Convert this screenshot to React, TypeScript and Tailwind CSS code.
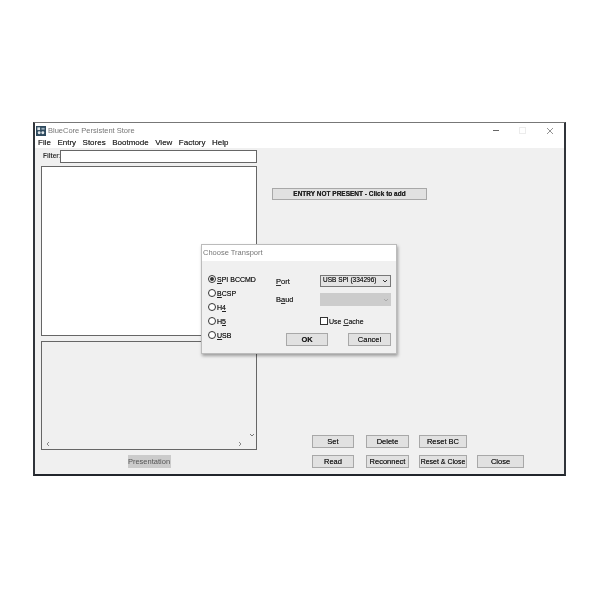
import React from "react";

const Btn = ({ label, w, cls = "" }: { label: string; w: string; cls?: string }) => (
  <div className={`${w} h-[13px] shrink-0 flex items-center justify-center whitespace-nowrap bg-[#e1e1e1] border border-[#a8a8a8] text-[7.5px] leading-none text-[#222] [text-shadow:0_0_0.5px_#444] ${cls}`}>
    {label}
  </div>
);

const Radio = ({ label, on }: { label: React.ReactNode; on?: boolean }) => (
  <div className="flex items-center gap-[1px] h-[14px] text-[7px] leading-none text-[#222] whitespace-nowrap [text-shadow:0_0_0.5px_#444]">
    <span className="w-[8px] h-[8px] rounded-full border border-[#333] bg-white flex items-center justify-center">
      {on && <span className="w-[4px] h-[4px] rounded-full bg-[#333]" />}
    </span>
    <span>{label}</span>
  </div>
);

export default function App() {
  const menu = ["File", "Entry", "Stores", "Bootmode", "View", "Factory", "Help"];
  return (
    <div className="w-[600px] h-[600px] bg-white pl-[33px] pt-[122px] font-['Liberation_Sans',sans-serif] overflow-hidden">
      <div className="relative w-[533px] h-[354px] flex flex-col border-l-2 border-r-2 border-b-2 border-t border-l-[#30343a] border-r-[#30343a] border-b-[#22262c] border-t-[#777] bg-white blur-[0.3px]">
        {/* title bar */}
        <div className="h-[13px] mt-[1px] flex items-center pl-[1px] shrink-0">
          <svg width="10" height="10" viewBox="0 0 11 11" className="shrink-0">
            <rect width="11" height="11" fill="#2f4a5e" />
            <rect x="1.5" y="1.5" width="3" height="3" fill="#dfe6ea" />
            <rect x="6" y="2" width="3.5" height="2" fill="#9fb2be" />
            <circle cx="3.5" cy="7.5" r="1.6" fill="#dfe6ea" />
            <circle cx="7.5" cy="7.5" r="1.6" fill="#dfe6ea" />
          </svg>
          <span className="ml-[2px] text-[7.5px] leading-none text-[#777]">BlueCore Persistent Store</span>
          <div className="ml-auto flex items-center gap-[20px] pr-[10px]">
            <span className="w-[6px] h-[1px] bg-[#666]" />
            <span className="w-[7px] h-[7px] border border-[#ececec]" />
            <svg width="8" height="8" viewBox="0 0 8 8"><path d="M1 1l6 6M7 1l-6 6" stroke="#777" strokeWidth="0.8" /></svg>
          </div>
        </div>
        {/* menu */}
        <div className="h-[10px] mt-[1px] flex items-center gap-[6.5px] pl-[3px] shrink-0 text-[8px] leading-none text-[#333] [text-shadow:0_0_0.5px_#555]">
          {menu.map((m) => <span key={m}>{m}</span>)}
        </div>
        {/* content */}
        <div className="flex-1 bg-[#f0f0f0] flex min-h-0">
          <div className="w-[222px] shrink-0 pl-[6px] flex flex-col">
            <div className="flex items-center h-[13px] mt-[2px]">
              <span className="w-[19px] pl-[2px] text-[6.5px] font-bold leading-none text-[#333] whitespace-nowrap">Filter:</span>
              <div className="w-[197px] h-[13px] bg-white border border-[#666]" />
            </div>
            <div className="w-[216px] h-[170px] mt-[3px] bg-white border border-[#666]" />
            <div className="relative w-[216px] h-[109px] mt-[5px] border border-[#666] bg-[#f0f0f0]">
              <svg width="6" height="4" viewBox="0 0 6 4" className="absolute right-[1px] bottom-[12px]"><path d="M1 1l2 2 2-2" stroke="#777" fill="none" /></svg>
              <svg width="4" height="6" viewBox="0 0 4 6" className="absolute left-[4px] bottom-[2px]"><path d="M3 1L1 3l2 2" stroke="#888" fill="none" /></svg>
              <svg width="4" height="6" viewBox="0 0 4 6" className="absolute right-[14px] bottom-[2px]"><path d="M1 1l2 2-2 2" stroke="#888" fill="none" /></svg>
            </div>
            <div className="w-[216px] flex justify-center mt-[5px]">
              <div className="w-[43px] h-[13px] flex items-center justify-center bg-[#cbcbcb] text-[7.5px] leading-none text-[#555] whitespace-nowrap">Presentation</div>
            </div>
          </div>
          <div className="flex-1 flex flex-col pl-[15px]">
            <Btn label="ENTRY NOT PRESENT - Click to add" w="w-[155px]" cls="mt-[40px] !h-[12px] bg-[#dcdcdc] font-bold !text-[6.5px]" />
            <div className="mt-auto pl-[40px] pb-[6px] flex flex-col gap-[7px]">
              <div className="flex">
                <Btn label="Set" w="w-[42px]" />
                <Btn label="Delete" w="w-[43px]" cls="ml-[12px]" />
                <Btn label="Reset BC" w="w-[48px]" cls="ml-[10px]" />
              </div>
              <div className="flex">
                <Btn label="Read" w="w-[42px]" />
                <Btn label="Reconnect" w="w-[43px]" cls="ml-[12px]" />
                <Btn label="Reset & Close" w="w-[48px]" cls="ml-[10px] !text-[7px]" />
                <Btn label="Close" w="w-[47px]" cls="ml-[10px]" />
              </div>
            </div>
          </div>
        </div>
        {/* dialog */}
        <div className="absolute left-[166px] top-[121px] w-[196px] h-[110px] flex flex-col bg-[#f0f0f0] border border-[#bbb] shadow-[1px_2px_3px_rgba(0,0,0,0.35)]">
          <div className="h-[16px] shrink-0 bg-white flex items-center pl-[1px] text-[7.5px] leading-none text-[#777]">Choose Transport</div>
          <div className="flex-1 flex pl-[6px]">
            <div className="flex flex-col mt-[11px] w-[68px] shrink-0">
              <Radio on label={<><u>S</u>PI BCCMD</>} />
              <Radio label={<><u>B</u>CSP</>} />
              <Radio label={<>H<u>4</u></>} />
              <Radio label={<>H<u>5</u></>} />
              <Radio label={<><u>U</u>SB</>} />
            </div>
            <div className="flex-1 flex flex-col mt-[13px] pr-[5px]">
              <div className="flex items-center h-[13px]">
                <span className="w-[44px] pt-[2px] text-[7.5px] leading-none text-[#333] [text-shadow:0_0_0.5px_#444]"><u>P</u>ort</span>
                <div className="w-[71px] h-[12px] bg-[#e4e4e4] border border-[#777] flex items-center justify-between px-[2px] text-[6.5px] leading-none text-[#222] whitespace-nowrap [text-shadow:0_0_0.5px_#444]">
                  <span>USB SPI (334296)</span>
                  <svg width="6" height="4" viewBox="0 0 6 4"><path d="M1 1l2 2 2-2" stroke="#333" fill="none" /></svg>
                </div>
              </div>
              <div className="flex items-center h-[13px] mt-[6px]">
                <span className="w-[44px] text-[7.5px] leading-none text-[#333] [text-shadow:0_0_0.5px_#444]">B<u>a</u>ud</span>
                <div className="w-[71px] h-[13px] bg-[#cccccc] flex items-center justify-end px-[2px]">
                  <svg width="6" height="4" viewBox="0 0 6 4"><path d="M1 1l2 2 2-2" stroke="#aaa" fill="none" /></svg>
                </div>
              </div>
              <div className="flex items-center gap-[1px] mt-[10px] ml-[44px] h-[10px] text-[7px] leading-none text-[#333] whitespace-nowrap [text-shadow:0_0_0.5px_#444]">
                <span className="w-[8px] h-[8px] bg-white border border-[#333]" />
                <span>Use <u>C</u>ache</span>
              </div>
              <div className="flex mt-[7px] ml-[10px]">
                <Btn label="OK" w="w-[42px]" cls="font-bold" />
                <Btn label="Cancel" w="w-[43px]" cls="ml-[20px]" />
              </div>
            </div>
          </div>
        </div>
      </div>
    </div>
  );
}
